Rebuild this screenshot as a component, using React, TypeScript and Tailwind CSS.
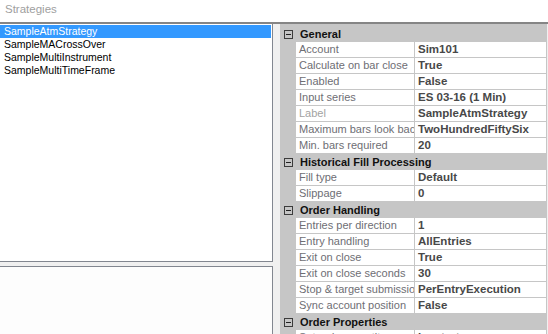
import React from "react";

type Row =
  | { kind: "cat"; label: string }
  | { kind: "prop"; name: string; value: string; dim?: boolean };

const strategies = [
  "SampleAtmStrategy",
  "SampleMACrossOver",
  "SampleMultiInstrument",
  "SampleMultiTimeFrame",
];

const rows: Row[] = [
  { kind: "cat", label: "General" },
  { kind: "prop", name: "Account", value: "Sim101" },
  { kind: "prop", name: "Calculate on bar close", value: "True" },
  { kind: "prop", name: "Enabled", value: "False" },
  { kind: "prop", name: "Input series", value: "ES 03-16 (1 Min)" },
  { kind: "prop", name: "Label", value: "SampleAtmStrategy", dim: true },
  { kind: "prop", name: "Maximum bars look back", value: "TwoHundredFiftySix" },
  { kind: "prop", name: "Min. bars required", value: "20" },
  { kind: "cat", label: "Historical Fill Processing" },
  { kind: "prop", name: "Fill type", value: "Default" },
  { kind: "prop", name: "Slippage", value: "0" },
  { kind: "cat", label: "Order Handling" },
  { kind: "prop", name: "Entries per direction", value: "1" },
  { kind: "prop", name: "Entry handling", value: "AllEntries" },
  { kind: "prop", name: "Exit on close", value: "True" },
  { kind: "prop", name: "Exit on close seconds", value: "30" },
  { kind: "prop", name: "Stop & target submission", value: "PerEntryExecution" },
  { kind: "prop", name: "Sync account position", value: "False" },
  { kind: "cat", label: "Order Properties" },
  { kind: "prop", name: "Set order quantity", value: "by strategy" },
];

function MinusBox() {
  return (
    <div className="ml-[4px] mr-[7px] w-[9px] h-[9px] border border-[#3c3c3c] flex items-center justify-center shrink-0">
      <div className="w-[5px] h-px bg-[#222]" />
    </div>
  );
}

function GridRow({ row }: { row: Row }) {
  if (row.kind === "cat") {
    return (
      <div className="h-[16px] flex items-center text-[11px] font-bold text-[#111] leading-none">
        <MinusBox />
        <span className="pt-px">{row.label}</span>
      </div>
    );
  }
  return (
    <div className="h-[16px] flex pl-[16px]">
      <div
        className={`w-[118px] bg-white border-b border-[#c6c6c6] pl-[3px] text-[11px] leading-[15px] whitespace-nowrap overflow-hidden ${
          row.dim ? "text-[#a2a2a2]" : "text-[#6e6e74]"
        }`}
      >
        {row.name}
      </div>
      <div className="flex-1 bg-white border-l border-b border-[#c6c6c6] pl-[3px] text-[11.5px] font-bold leading-[15px] text-[#484848] whitespace-nowrap overflow-hidden">
        {row.value}
      </div>
    </div>
  );
}

export default function App() {
  return (
    <div
      className="w-[548px] h-[334px] overflow-hidden bg-[#f0f0f0] flex flex-col"
      style={{ fontFamily: '"Liberation Sans", Arial, sans-serif' }}
    >
      {/* Header */}
      <div className="h-[22px] bg-white px-[5px] pt-[1px] text-[11.5px] text-[#a0a0a0]">
        Strategies
      </div>
      <div className="h-[2px] bg-[#858585]" />

      <div className="flex flex-1 min-h-0">
        {/* Left column */}
        <div className="w-[273px] flex flex-col gap-[4px]">
          <div className="h-[238px] bg-white border-r border-b border-[#828790] pt-px">
            {strategies.map((s, i) => (
              <div
                key={s}
                className={`h-[13px] pl-[4px] mr-[1px] text-[10.5px] leading-[13px] ${
                  i === 0 ? "bg-[#3399ff] text-white" : "text-black"
                }`}
              >
                {s}
              </div>
            ))}
          </div>
          <div className="flex-1 bg-[#fdfdfd] border-t border-r border-[#828790]" />
        </div>

        {/* Property grid */}
        <div className="ml-[7px] w-[267px] bg-[#c6c6c6] pt-[2px] pr-px">
          {rows.map((r, i) => (
            <GridRow key={i} row={r} />
          ))}
        </div>
      </div>
    </div>
  );
}
